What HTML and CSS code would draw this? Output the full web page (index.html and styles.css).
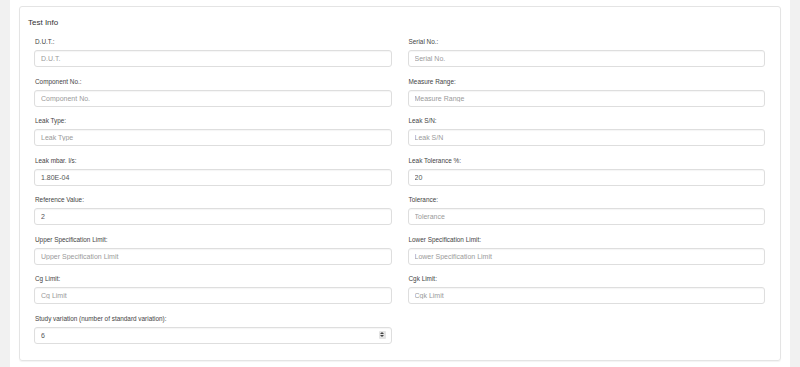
FILE: index.html
```html
<!DOCTYPE html>
<html lang="en">
<head>
    <meta charset="UTF-8">
    <meta name="viewport" content="width=device-width, initial-scale=1.0">
    <title>Test Info</title>
    <link rel="stylesheet" href="styles.css">
</head>
<body>
    <div class="page">
        <div class="panel">
            <div class="panel-title">Test Info</div>
            <div class="form-grid">
                <div class="field">
                    <label>D.U.T.:</label>
                    <input type="text" placeholder="D.U.T.">
                </div>
                <div class="field">
                    <label>Serial No.:</label>
                    <input type="text" placeholder="Serial No.">
                </div>

                <div class="field">
                    <label>Component No.:</label>
                    <input type="text" placeholder="Component No.">
                </div>
                <div class="field">
                    <label>Measure Range:</label>
                    <input type="text" placeholder="Measure Range">
                </div>

                <div class="field">
                    <label>Leak Type:</label>
                    <input type="text" placeholder="Leak Type">
                </div>
                <div class="field">
                    <label>Leak S/N:</label>
                    <input type="text" placeholder="Leak S/N">
                </div>

                <div class="field">
                    <label>Leak mbar. l/s:</label>
                    <input type="text" value="1.80E-04">
                </div>
                <div class="field">
                    <label>Leak Tolerance %:</label>
                    <input type="text" value="20">
                </div>

                <div class="field">
                    <label>Reference Value:</label>
                    <input type="text" value="2">
                </div>
                <div class="field">
                    <label>Tolerance:</label>
                    <input type="text" placeholder="Tolerance">
                </div>

                <div class="field">
                    <label>Upper Specification Limit:</label>
                    <input type="text" placeholder="Upper Specification Limit">
                </div>
                <div class="field">
                    <label>Lower Specification Limit:</label>
                    <input type="text" placeholder="Lower Specification Limit">
                </div>

                <div class="field">
                    <label>Cg Limit:</label>
                    <input type="text" placeholder="Cg Limit">
                </div>
                <div class="field">
                    <label>Cgk Limit:</label>
                    <input type="text" placeholder="Cgk Limit">
                </div>

                <div class="field">
                    <label>Study variation (number of standard variation):</label>
                    <div class="number-box">
                        <input type="text" value="6">
                        <span class="spinner">
                            <span class="arrow-up"></span>
                            <span class="arrow-down"></span>
                        </span>
                    </div>
                </div>
            </div>
        </div>
    </div>
</body>
</html>
```

FILE: styles.css
```css
body {
    margin: 0;
    background-color: #f1f1f1;
    font-family: "Liberation Sans", Arial, sans-serif;
    color: #333;
}
.page {
    margin: 0 10px;
    min-height: 100vh;
    padding-top: 6px;
    background: #fff;
    box-sizing: border-box;
}
.panel {
    margin: 0 9px;
    border: 1px solid #e4e4e4;
    border-radius: 3px;
    box-shadow: 0 1px 1px rgba(0, 0, 0, 0.05);
    padding: 10px 15px 7px 14px;
}
.panel-title {
    margin-left: -6px;
    font-size: 8px;
    line-height: 11px;
    margin-bottom: 9px;
}
.form-grid {
    display: grid;
    grid-template-columns: 1fr 1fr;
    column-gap: 16px;
}
.field {
    margin-bottom: 9.5px;
}
.field label {
    display: block;
    font-size: 6.4px;
    line-height: 10px;
    margin-bottom: 3px;
    padding-left: 1px;
    color: #444;
}
.field input {
    display: block;
    width: 100%;
    height: 17px;
    box-sizing: border-box;
    padding: 0 6px;
    border: 1px solid #dedede;
    border-radius: 3px;
    box-shadow: inset 0 1px 1px rgba(0, 0, 0, 0.04);
    font-family: "Liberation Sans", Arial, sans-serif;
    font-size: 7px;
    color: #555;
    background: #fff;
    outline: none;
}
.field input::placeholder {
    color: #9a9a9a;
}
.number-box {
    position: relative;
}
.spinner {
    position: absolute;
    right: 6px;
    top: 4px;
    width: 7px;
    height: 8px;
    background: #e4e4e4;
    border-radius: 1px;
    display: flex;
    flex-direction: column;
    align-items: center;
    justify-content: center;
    gap: 1px;
}
.arrow-up {
    width: 0;
    height: 0;
    border-left: 2px solid transparent;
    border-right: 2px solid transparent;
    border-bottom: 2.5px solid #444;
}
.arrow-down {
    width: 0;
    height: 0;
    border-left: 2px solid transparent;
    border-right: 2px solid transparent;
    border-top: 2.5px solid #444;
}
```
